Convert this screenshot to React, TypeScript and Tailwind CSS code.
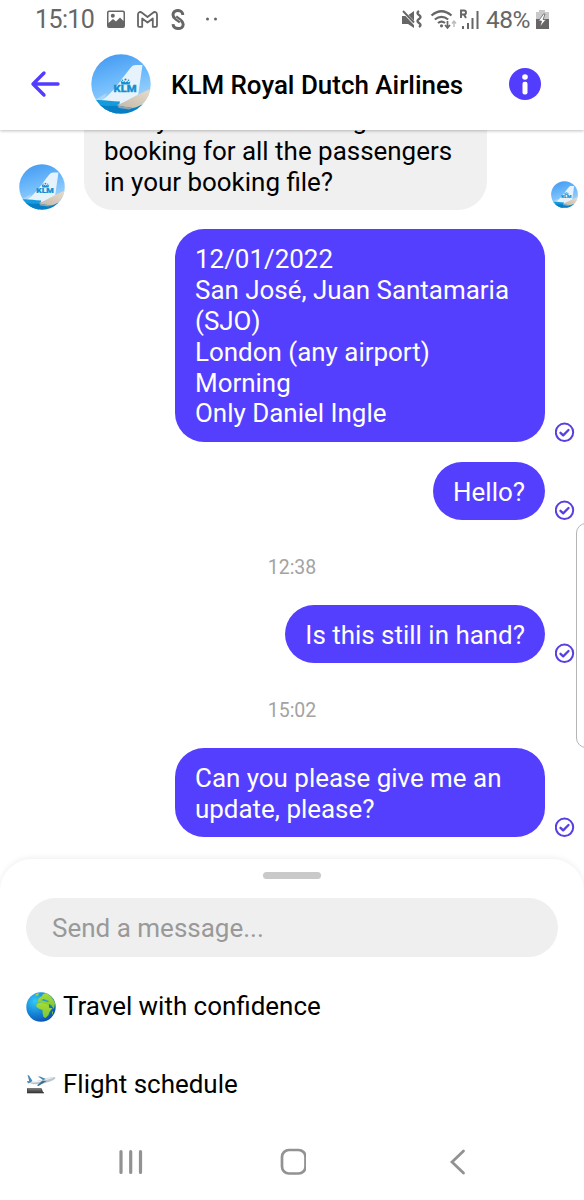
import type { ReactNode } from 'react'

const FONT = "font-['Roboto','Noto_Sans',sans-serif]"

interface AvatarProps {
  id: string
  className: string
}

function Avatar({ id, className }: AvatarProps) {
  return (
    <svg viewBox="0 0 60 60" className={`shrink-0 ${className}`}>
      <defs>
        <linearGradient id={`${id}-sky`} x1="0" y1="0" x2="0.3" y2="1">
          <stop offset="0" stopColor="#3f96f0" />
          <stop offset="0.5" stopColor="#6cb9fb" />
          <stop offset="1" stopColor="#a9d9fb" />
        </linearGradient>
        <linearGradient id={`${id}-wing`} x1="1" y1="0" x2="0" y2="1">
          <stop offset="0" stopColor="#e9dccb" />
          <stop offset="1" stopColor="#c3b8aa" />
        </linearGradient>
        <clipPath id={`${id}-clip`}>
          <circle cx="30" cy="30" r="29.7" />
        </clipPath>
      </defs>
      <g clipPath={`url(#${id}-clip)`}>
        <rect width="60" height="60" fill={`url(#${id}-sky)`} />
        <path d="M0 48 16 39 12 48Z" fill="#a8d5f8" />
        <path d="M11 46C21 40 29 27 39 14.500C41 12 42 11 45 11H51.500L47 42 30 50 8 48Z" fill="#e6f3fc" />
        <path d="M0 46.500C10 45 18 47 29 47.500L26 60H0Z" fill="#159ade" />
        <path d="M8 51C18 53 24 51 30 52L60 50V60H8Z" fill="#087fc4" />
        <path d="M26 51C35 48 46 40 60 35V45C53 49 48 53 42 54L34 53Z" fill={`url(#${id}-wing)`} />
        <path d="M26 51.500 42 54 38 55.500 28 54Z" fill="#8aa4b5" />
      </g>
      <g fill="#168fd0">
        <path d="m29.500 26.500 2.500 1.500 1.500-1 1 1.500 2-1.500 1 1.500 1.500-1 .5-.5-1 3.500h-8Z" />
        <circle cx="34.500" cy="25.500" r="1.100" />
        <circle cx="31.500" cy="26.300" r=".8" />
        <circle cx="37.500" cy="26.300" r=".8" />
      </g>
      <text
        x="22.500"
        y="38"
        textLength="23"
        lengthAdjust="spacingAndGlyphs"
        fontSize="9"
        fontWeight="900"
        fill="#168fd0"
        stroke="#168fd0"
        strokeWidth=".3"
      >
        KLM
      </text>
    </svg>
  )
}

function StatusBar() {
  return (
    <div className="flex h-10 items-center pl-[35px] text-[#666666]">
      <span className="w-[71px] text-[25px] leading-10 tracking-[-0.6px]">15:10</span>
      <svg className="h-5 w-5" viewBox="0 0 20 20">
        <path
          fillRule="evenodd"
          fill="currentColor"
          d="M3 .5h14a2 2 0 0 1 2 2V16a2 2 0 0 1-2 2H3a2 2 0 0 1-2-2V2.500a2 2 0 0 1 2-2Zm-.5 12.500 4.500-4 3 2.500 4-4 3.500 3.500V3q0-1-1-1h-13q-1 0-1 1Z"
        />
        <circle cx="6.800" cy="5.800" r="2" fill="currentColor" />
      </svg>
      <svg
        className="ml-2.5 h-5 w-[23px]"
        viewBox="0 0 23 20"
        fill="none"
        stroke="currentColor"
        strokeWidth="1.800"
        strokeLinejoin="round"
      >
        <path d="M2 15.500V4.500C2 1.800 4.500 1.500 6 2.700L11.500 7 17 2.700C18.500 1.500 21 1.800 21 4.500V15.500Q21 16.800 19.800 16.800H16.800V8.500L11.500 12.500 6.200 8.500V16.800H3.200Q2 16.800 2 15.500Z" />
      </svg>
      <svg className="ml-[11px] h-[22px] w-4" viewBox="0 0 16 22" fill="none" stroke="currentColor" strokeWidth="3">
        <path d="M12.800 6C12.800 0 3 0 3 5.800c0 2 1 2.900 2.500 3.900l4.500 3.300" />
        <path d="m6 7.800 4.700 3.400c1.500 1.100 2.500 2 2.500 4 0 5.800-9.900 5.800-10.200 0" />
        <path d="m5.800 8.800 4.700 3.400" stroke="#fff" strokeWidth=".6" />
      </svg>
      <svg className="ml-[18px] h-5 w-4" viewBox="0 0 16 20" fill="currentColor">
        <circle cx="3.500" cy="9" r="1.500" />
        <circle cx="11.500" cy="9" r="1.500" />
      </svg>
      <svg className="ml-[181px] h-[22px] w-[22px]" viewBox="0 0 22 22" fill="currentColor">
        <path d="M1 7h5l7-5v17l-6-4H1Z" />
        <path d="m1 1 13 14" stroke="#fff" strokeWidth="3" />
        <path d="m2 2 11 11.500" stroke="currentColor" strokeWidth="1.900" />
        <path
          d="M18 2q-3 2 0 4t0 4q-3 2 0 4t0 4"
          fill="none"
          stroke="currentColor"
          strokeWidth="2.400"
        />
      </svg>
      <svg className="ml-[7px] h-[22px] w-[27px]" viewBox="0 0 27 22" fill="none" stroke="currentColor">
        <path d="M1.500 6.500Q11.500-2 21.500 6.500M4.800 10.500q6.700-5.400 13.400 0M8 14q3.500-2.800 7 0" strokeWidth="2.200" />
        <circle cx="11.500" cy="16.800" r="1.600" fill="currentColor" stroke="none" />
        <path d="M17.500 12v7m-2.500-3 2.500 3 2.500-3" strokeWidth="1.700" />
        <path d="M24 18v-6m-2 2.500 2-2.500 2 2.500" stroke="#bbbbbb" strokeWidth="1.400" />
      </svg>
      <svg className="ml-0.5 h-[22px] w-5" viewBox="0 0 20 22" fill="none" stroke="currentColor" strokeWidth="2">
        <path d="M2 9V1.500h3q2 0 2 2t-2 2H2m3 0 2 3.500" strokeWidth="1.900" />
        <path d="M4 17v3M9 14v6M13.500 9v11M18.500 2v18" />
      </svg>
      <span className="ml-[7px] w-[47px] text-[24.500px] leading-10 tracking-[-0.5px]">48%</span>
      <svg className="ml-[2px] h-5 w-[15px]" viewBox="0 0 15 20">
        <path d="M4 0h6v2h4v9H1V2h3Z" fill="#c9c9c9" />
        <path d="M1 9h13v10H1Z" fill="currentColor" />
        <path d="M8.500 4 3.500 11h3L5 17l6-7.500H8L10 4Z" fill="#fff" stroke="#666" strokeWidth=".8" />
      </svg>
    </div>
  )
}

function Header() {
  return (
    <header className="relative z-10 h-[130px] shrink-0 bg-white shadow-[0_1px_3px_rgba(0,0,0,0.25)]">
      <StatusBar />
      <div className="flex h-[88px] items-center pl-[30px]">
        <svg
          className="h-[30px] w-[30px]"
          viewBox="0 0 30 30"
          fill="none"
          stroke="#523dff"
          strokeWidth="3.400"
          strokeLinecap="round"
          strokeLinejoin="round"
        >
          <path d="M28 15H3M14 4 3 15l11 11" />
        </svg>
        <Avatar id="header" className="ml-[31px] h-[60px] w-[60px]" />
        <h1 className="ml-5 w-[338px] pt-0.5 whitespace-nowrap text-[25.950px] font-medium text-black">
          KLM Royal Dutch Airlines
        </h1>
        <svg className="h-8 w-8" viewBox="0 0 32 32">
          <circle cx="16" cy="16" r="16" fill="#523dff" />
          <circle cx="16" cy="9" r="2.800" fill="#fff" />
          <rect x="13.500" y="13.800" width="5" height="12.700" rx="2" fill="#fff" />
        </svg>
      </div>
    </header>
  )
}

function SentCheck() {
  return (
    <svg
      className="h-5 w-5 shrink-0"
      viewBox="0 0 20 20"
      fill="none"
      stroke="#5640e0"
      strokeWidth="2"
      strokeLinecap="round"
      strokeLinejoin="round"
    >
      <circle cx="9.500" cy="10.300" r="8.700" />
      <path d="m5.500 10.800 2.700 2.600 5.300-5.400" strokeWidth="2.300" />
    </svg>
  )
}

function SentMessage({ children, className = '' }: { children: ReactNode; className?: string }) {
  return (
    <div className="flex shrink-0 items-end justify-end gap-2.5 pr-[9px]">
      <div
        className={`whitespace-nowrap rounded-[29px] bg-[#543fff] px-5 pt-[15.200px] pb-[12.200px] text-[25.950px] leading-[30.850px] text-white ${className}`}
      >
        {children}
      </div>
      <SentCheck />
    </div>
  )
}

function TimeStamp({ children }: { children: string }) {
  return (
    <div className="flex h-[85px] shrink-0 items-center justify-center pt-[10px] text-[19.500px] text-[#a3a3a3]">
      {children}
    </div>
  )
}

function Conversation() {
  return (
    <main className="flex h-[729px] shrink-0 flex-col justify-end overflow-hidden pb-[22px]">
      <div className="mb-[19.500px] flex shrink-0 items-end pl-[19px]">
        <Avatar id="sender" className="h-[46px] w-[46px]" />
        <div className="ml-[19px] w-[403px] whitespace-nowrap rounded-[29px] bg-[#f0f0f0] px-5 pt-[15.200px] pb-[12.200px] text-[25.950px] leading-[30.850px] text-black">
          And you want to change the
          <br />
          booking for all the passengers
          <br />
          in your booking file?
        </div>
        <Avatar id="seen" className="mb-[2px] ml-16 h-[27px] w-[27px]" />
      </div>
      <SentMessage className="w-[370px]">
        12/01/2022
        <br />
        San José, Juan Santamaria
        <br />
        (SJO)
        <br />
        London (any airport)
        <br />
        Morning
        <br />
        Only Daniel Ingle
      </SentMessage>
      <div className="h-5 shrink-0" />
      <SentMessage>Hello?</SentMessage>
      <TimeStamp>12:38</TimeStamp>
      <SentMessage>Is this still in hand?</SentMessage>
      <TimeStamp>15:02</TimeStamp>
      <SentMessage className="w-[370px]">
        Can you please give me an
        <br />
        update, please?
      </SentMessage>
    </main>
  )
}

function GlobeIcon() {
  return (
    <svg className="h-[30px] w-[30px]" viewBox="0 0 30 30">
      <defs>
        <radialGradient id="ocean" cx=".3" cy=".3" r=".8">
          <stop offset="0" stopColor="#35c9f6" />
          <stop offset=".5" stopColor="#168bdb" />
          <stop offset="1" stopColor="#0a4cab" />
        </radialGradient>
        <linearGradient id="land" x1="0" y1="0" x2="0" y2="1">
          <stop offset="0" stopColor="#a8dc35" />
          <stop offset="1" stopColor="#7cc535" />
        </linearGradient>
      </defs>
      <circle cx="15" cy="15" r="14.700" fill="url(#ocean)" />
      <g fill="url(#land)">
        <path d="m11.500 9 1.500-3 3-2 1-2 3-1q6 3 9 10l-1 6-3-4-2-1 0 3-2 1-3-4-4-2-2 1Z" />
        <path d="m10.500 12 4-1.500 4 1 3 1 2 3.500 3 0-3 4-1 3-3 3-2-1-1-4 0-3-3-1-3-2Z" />
        <path d="m9 3 3-2 1 1-2 2ZM26 20l1-1v2l-1 2Z" />
      </g>
      <path d="m15 8 3-1 2 1 3 1-1 1-4-1Z" fill="#209bd8" />
    </svg>
  )
}

function DepartureIcon() {
  return (
    <svg className="h-[30px] w-[30px]" viewBox="0 0 30 30">
      <path d="M2 11.500c3 1 7 0 12-1.200l9-2.600q5-1.500 6.500.1 0 1.700-5.500 3.700-7 2.800-13 2.800Q4 14.500 2 11.500Z" fill="#b9c6cf" />
      <path d="M5 11.500q7 1 15-2l7-2" stroke="#eef2f5" strokeWidth="1.300" fill="none" />
      <path d="m1.500 5 1.500.5 3.500 5.500-3 1ZM12 6.500l2 0 6 2.500-3 1ZM1 11l5 .5-4 2Z" fill="#4689b5" />
      <path d="m16.500 10.500 4 .5-8 5-1.500-.5Z" fill="#3f6e8b" />
      <path d="M1 18.300h14.500l2 4.700H1Z" fill="#4a4a4a" />
      <path d="M2 19.800h13" stroke="#888" strokeWidth=".8" />
      <path d="M1 22.800h17" stroke="#333" />
    </svg>
  )
}

function QuickReply({ icon, children }: { icon: ReactNode; children: string }) {
  return (
    <button className="flex h-[78px] w-full items-center gap-[7px] pl-[26px] text-left text-[25.950px] text-black">
      {icon}
      <span>{children}</span>
    </button>
  )
}

function Composer() {
  return (
    <section className="relative z-10 h-[265px] shrink-0 rounded-t-[32px] bg-white shadow-[0_-1px_6px_rgba(0,0,0,0.07)]">
      <div className="flex justify-center pt-[13px]">
        <div className="h-[7px] w-[58px] rounded-full bg-[#c9c9c9]" />
      </div>
      <div className="mx-[26px] mt-[19px] mb-[10.500px] flex h-[59px] items-center rounded-full bg-[#efefef] px-[26px] pt-px text-[26px] text-[#999999]">
        Send a message...
      </div>
      <QuickReply icon={<GlobeIcon />}>Travel with confidence</QuickReply>
      <QuickReply icon={<DepartureIcon />}>Flight schedule</QuickReply>
    </section>
  )
}

function NavBar() {
  return (
    <nav className="relative z-20 flex h-[76px] items-center justify-between bg-white px-[117px] text-[#929292]">
      <svg
        className="h-[28px] w-[28px]"
        viewBox="0 0 28 28"
        fill="none"
        stroke="currentColor"
        strokeWidth="3.200"
        strokeLinecap="round"
      >
        <path d="M4 3.500v21M13.700 3.500v21M23.500 3.500v21" />
      </svg>
      <svg className="h-[28px] w-[28px]" viewBox="0 0 28 28" fill="none" stroke="currentColor" strokeWidth="2.700">
        <rect x="4.200" y="2" width="23.500" height="23.500" rx="7" className="[transform:translateX(-0.2px)]" />
      </svg>
      <svg
        className="h-[28px] w-[28px]"
        viewBox="0 0 28 28"
        fill="none"
        stroke="currentColor"
        strokeWidth="2.800"
        strokeLinecap="round"
      >
        <path d="M24.500 3 13 14l11.500 11" />
      </svg>
    </nav>
  )
}

export default function App() {
  return (
    <div className={`relative flex h-[1200px] w-[584px] flex-col overflow-hidden bg-white ${FONT}`}>
      <Header />
      <Conversation />
      <Composer />
      <NavBar />
      <div className="absolute top-[523px] left-[576px] z-20 h-[225px] w-5 rounded-[10px] border border-[#b5b5b5] bg-white" />
    </div>
  )
}
